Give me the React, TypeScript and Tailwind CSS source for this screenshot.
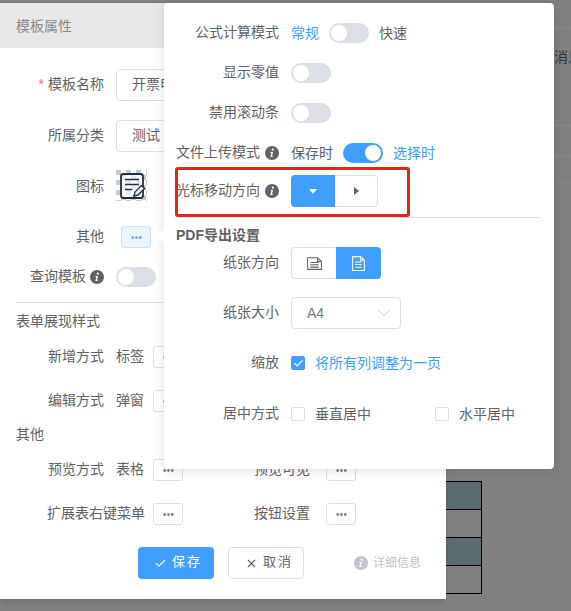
import { Check, ChevronDown, Ellipsis, X } from "lucide-react"

function InfoIcon({ className = "text-[#606266]" }: { className?: string }) {
  return (
    <svg viewBox="0 0 14 14" className={`w-[14px] h-[14px] shrink-0 ${className}`}>
      <circle cx="7" cy="7" r="7" fill="currentColor" />
      <circle cx="7.8" cy="3.7" r="1.1" fill="#fff" />
      <path d="M5.6 6.1h2.500L7 10.200h1.100l-.2.9H5.300L6.400 7H5.400z" fill="#fff" />
    </svg>
  )
}

function Switch({ on = false }: { on?: boolean }) {
  return (
    <div className={`w-10 h-5 rounded-full p-0.5 flex shrink-0 ${on ? "bg-[#409eff] justify-end" : "bg-[#dcdfe6] justify-start"}`}>
      <div className="w-4 h-4 rounded-full bg-white" />
    </div>
  )
}

function DotsButton({ active = false }: { active?: boolean }) {
  return (
    <div
      className={`w-[30px] h-[22px] rounded-[3px] border flex items-center justify-center shrink-0 ${
        active ? "bg-[#ecf5ff] border-[#c6e2ff] text-[#409eff]" : "bg-white border-[#dcdfe6] text-[#606266]"
      }`}
    >
      <Ellipsis size={13} strokeWidth={3} />
    </div>
  )
}

function FormRow({ label, width = "w-[88px]", children }: { label: string; width?: string; children?: React.ReactNode }) {
  return (
    <div className="flex items-center">
      <span className={`${width} text-right whitespace-nowrap pb-0.5`}>{label}</span>
      {children}
    </div>
  )
}

function OptionRow({ label, info, height = "h-10", children }: { label: string; info?: boolean; height?: string; children?: React.ReactNode }) {
  return (
    <div className={`flex items-center ${height}`}>
      <div className="w-[104px] flex items-center justify-end gap-[5px] shrink-0 whitespace-nowrap">
        <span className="pb-0.5">{label}</span>
        {info && <InfoIcon />}
      </div>
      <div className="flex items-center ml-[12px]">{children}</div>
    </div>
  )
}

function CheckBox({ checked = false }: { checked?: boolean }) {
  return (
    <div
      className={`w-[14px] h-[14px] rounded-[2px] border flex items-center justify-center shrink-0 ${
        checked ? "bg-[#409eff] border-[#409eff]" : "bg-white border-[#dcdfe6]"
      }`}
    >
      {checked && <Check size={11} strokeWidth={2.5} className="text-white" />}
    </div>
  )
}

function PageIcon({ landscape = false }: { landscape?: boolean }) {
  return (
    <svg viewBox="0 0 16 16" fill="none" stroke="currentColor" strokeWidth="1" className="w-[17px] h-[17px]">
      {landscape ? (
        <path d="M1.500 2.500h9.500l3.500 3.500v7.500h-13zM4 7h8M4 9.200h8M4 11.400h8M11 2.500V6h3.500" />
      ) : (
        <path d="M2.500 1.500h7.500l3.500 3.500v9.500h-11zM5 6.500h6M5 9h6M5 11.500h6M10 1.500V5h3.500" />
      )}
    </svg>
  )
}

function TemplateIcon() {
  return (
    <svg viewBox="0 0 31 31" className="w-[31px] h-[31px]">
      <defs>
        <pattern id="checker" width="10" height="10" patternUnits="userSpaceOnUse">
          <rect width="5" height="5" fill="#c9c9c9" />
          <rect x="5" y="5" width="5" height="5" fill="#c9c9c9" />
        </pattern>
      </defs>
      <rect width="31" height="31" fill="url(#checker)" />
      <rect x="5" y="4" width="22" height="24" rx="2.500" fill="#fff" fillOpacity=".65" stroke="#1f2f46" strokeWidth="1.800" />
      <path d="M9 9.500h14M9 14.500h14M9 19.500h7" stroke="#1f2f46" strokeWidth="1.600" />
      <path d="M18 26l1-4 6.500-6.500 3 3L22 25z" fill="#fff" stroke="#1f2f46" strokeWidth="1.400" />
    </svg>
  )
}

function Backdrop() {
  const rows = ["bg-[#5c6b6f]", "bg-[#808080]", "bg-[#5c6b6f]", "bg-[#808080]"]
  return (
    <>
      <div className="absolute left-[554px] right-0 top-[27px] h-px bg-[#8a8a8a]" />
      <div className="absolute left-[554px] right-0 top-[125px] h-px bg-[#8a8a8a]" />
      <div className="absolute left-[554px] right-0 top-[155px] h-px bg-[#8a8a8a]" />
      <div className="absolute left-[554px] right-0 top-[183px] h-px bg-[#868686]" />
      <span className="absolute left-[554px] top-[47px] text-[14px] leading-5 text-[#333] whitespace-nowrap">消息</span>
      <div className="absolute left-[440px] top-[481px] w-[42px] border-r border-t border-black flex flex-col">
        {rows.map((bg, i) => (
          <div key={i} className={`h-[28px] border-b border-black ${bg}`} />
        ))}
      </div>
    </>
  )
}

function TemplateDialog() {
  return (
    <div className="absolute left-0 top-[3px] w-[446px] h-[596px] bg-white shadow-md text-[14px] leading-5 text-[#606266]">
      <div className="h-[45px] bg-[#e8e8e8] px-4 flex items-center text-[#8a8a8a]">模板属性</div>

      <div className="px-4 pt-[21px] flex flex-col">
        <div className="flex items-center h-8">
          <span className="w-[88px] text-right whitespace-nowrap pb-0.5">
            <span className="text-[#f56c6c] mr-1">*</span>模板名称
          </span>
          <div className="ml-3 w-[220px] h-8 rounded border border-[#dcdfe6] px-[15px] pb-0.5 flex items-center">开票申请</div>
        </div>
        <div className="mt-[19px]">
          <FormRow label="所属分类">
            <div className="ml-3 w-[220px] h-8 rounded border border-[#dcdfe6] px-[15px] pb-0.5 flex items-center">测试</div>
          </FormRow>
        </div>
        <div className="mt-[18px] h-[31px] flex items-center">
          <span className="w-[88px] text-right whitespace-nowrap">图标</span>
          <div className="ml-3">
            <TemplateIcon />
          </div>
        </div>
        <div className="mt-[25px]">
          <FormRow label="其他">
            <div className="ml-[17px]">
              <DotsButton active />
            </div>
          </FormRow>
        </div>
        <div className="mt-[19px] h-5 flex items-center">
          <div className="w-[88px] flex items-center justify-end gap-1 whitespace-nowrap">
            <span className="pb-0.5">查询模板</span>
            <InfoIcon />
          </div>
          <div className="ml-3">
            <Switch />
          </div>
        </div>

        <div className="mt-[15px] h-px bg-[#dcdfe6]" />
        <div className="mt-[8px] h-5 flex items-center">表单展现样式</div>

        <div className="mt-[15px]">
          <FormRow label="新增方式">
            <span className="ml-3 w-[37px] pb-0.5">标签</span>
            <DotsButton />
          </FormRow>
        </div>
        <div className="mt-[22px]">
          <FormRow label="编辑方式">
            <span className="ml-3 w-[37px] pb-0.5">弹窗</span>
            <DotsButton />
          </FormRow>
        </div>
        <div className="mt-[12px] h-5 flex items-center">其他</div>

        <div className="mt-[15px] flex items-center">
          <FormRow label="预览方式">
            <span className="ml-3 w-[37px] pb-0.5">表格</span>
            <DotsButton />
          </FormRow>
          <div className="ml-[70px]">
            <FormRow label="预览可见" width="w-[57px]">
              <div className="ml-4">
                <DotsButton />
              </div>
            </FormRow>
          </div>
        </div>
        <div className="mt-[22px] flex items-center">
          <FormRow label="扩展表右键菜单" width="w-[129px]">
            <div className="ml-2">
              <DotsButton />
            </div>
          </FormRow>
          <div className="ml-[70px]">
            <FormRow label="按钮设置" width="w-[57px]">
              <div className="ml-4">
                <DotsButton />
              </div>
            </FormRow>
          </div>
        </div>

        <div className="mt-[22px] flex items-center pl-[122px]">
          <div className="w-[76px] h-8 rounded bg-[#409eff] text-white text-[13px] flex items-center pl-4 gap-[5px] tracking-[2px]">
            <Check size={13} />
            <span className="pb-0.5">保存</span>
          </div>
          <div className="ml-[14px] w-[76px] h-8 rounded border border-[#dcdfe6] text-[13px] flex items-center pl-4 gap-[5px] tracking-[2px]">
            <X size={13} />
            <span className="pb-0.5">取消</span>
          </div>
          <div className="ml-[50px] flex items-center gap-[5px] text-[12px] text-[#c0c4cc]">
            <InfoIcon className="text-[#c0c4cc] w-3 h-3" />
            <span>详细信息</span>
          </div>
        </div>
      </div>
    </div>
  )
}

function SettingsPopover() {
  return (
    <div className="absolute left-[164px] top-[3px] w-[390px] h-[466px] bg-white rounded-[4px] shadow-[0_2px_12px_rgba(0,0,0,0.12)] text-[14px] leading-5 text-[#606266] pt-[10px] px-[11px]">
      {/* arrow pointing at the other button */}
      <div className="absolute -left-[5px] top-[228px] w-[10px] h-[10px] bg-white rotate-45" />

      <OptionRow label="公式计算模式">
        <span className="text-[#409eff]">常规</span>
        <div className="mx-[10px]">
          <Switch />
        </div>
        <span>快速</span>
      </OptionRow>
      <OptionRow label="显示零值">
        <Switch />
      </OptionRow>
      <OptionRow label="禁用滚动条">
        <Switch />
      </OptionRow>
      <OptionRow label="文件上传模式" info>
        <span>保存时</span>
        <div className="mx-[10px]">
          <Switch on />
        </div>
        <span className="text-[#409eff]">选择时</span>
      </OptionRow>
      <OptionRow label="光标移动方向" info height="h-[36px]">
        <div className="flex h-8">
          <div className="w-[44px] rounded-l bg-[#409eff] flex items-center justify-center">
            <div className="w-0 h-0 border-x-[4px] border-x-transparent border-t-[5px] border-t-white" />
          </div>
          <div className="w-[43px] rounded-r border border-l-0 border-[#dcdfe6] flex items-center justify-center">
            <div className="w-0 h-0 border-y-[4px] border-y-transparent border-l-[5px] border-l-[#606266]" />
          </div>
        </div>
      </OptionRow>

      <div className="mt-[8px] mr-[3px] h-px bg-[#dcdfe6]" />
      <div className="mt-[7px] ml-[1px] h-5 flex items-center font-bold">PDF导出设置</div>

      <div className="mt-[2px]">
        <OptionRow label="纸张方向" height="h-8">
          <div className="flex h-8">
            <div className="w-[45px] rounded-l border border-r-0 border-[#dcdfe6] flex items-center justify-center">
              <PageIcon landscape />
            </div>
            <div className="w-[45px] rounded-r bg-[#409eff] text-white flex items-center justify-center">
              <PageIcon />
            </div>
          </div>
        </OptionRow>
      </div>
      <div className="mt-[18px]">
        <OptionRow label="纸张大小" height="h-8">
          <div className="w-[110px] h-8 rounded border border-[#dcdfe6] pl-[15px] pr-[5px] flex items-center justify-between text-[#777]">
            <span>A4</span>
            <ChevronDown size={22} strokeWidth={0.9} className="text-[#c0c4cc]" />
          </div>
        </OptionRow>
      </div>
      <div className="mt-[18px]">
        <OptionRow label="缩放" height="h-8">
          <CheckBox checked />
          <span className="ml-[10px] text-[#409eff]">将所有列调整为一页</span>
        </OptionRow>
      </div>
      <div className="mt-[19px]">
        <OptionRow label="居中方式" height="h-8">
          <CheckBox />
          <span className="ml-[10px] w-[120px]">垂直居中</span>
          <CheckBox />
          <span className="ml-[10px]">水平居中</span>
        </OptionRow>
      </div>
    </div>
  )
}

export default function App() {
  return (
    <div className="relative w-[571px] h-[611px] overflow-hidden bg-[#808080] font-['Liberation_Sans','Noto_Sans_CJK_SC',sans-serif]">
      <Backdrop />
      <TemplateDialog />
      <SettingsPopover />
      <div className="absolute left-[175px] top-[167px] w-[235px] h-[50px] border-[3px] border-[#e1251b] rounded-[3px]" />
    </div>
  )
}
